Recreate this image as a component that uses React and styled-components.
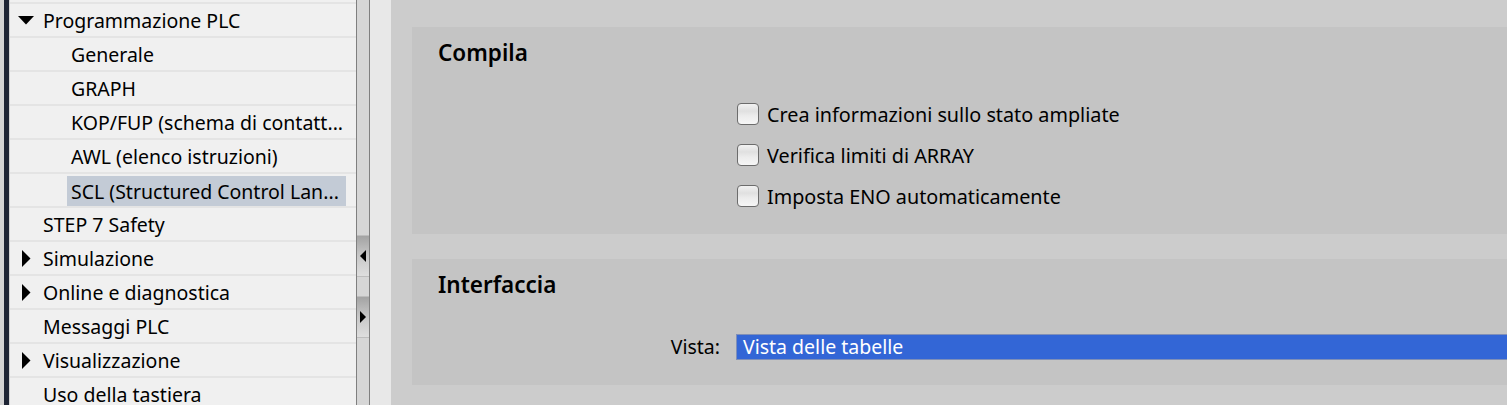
import React from "react";
import styled, { createGlobalStyle } from "styled-components";

const treeItems = [
  { label: "Programmazione PLC", level: 1, arrow: "down" },
  { label: "Generale", level: 2 },
  { label: "GRAPH", level: 2 },
  { label: "KOP/FUP (schema di contatt...", level: 2 },
  { label: "AWL (elenco istruzioni)", level: 2 },
  { label: "SCL (Structured Control Lan...", level: 2, selected: true },
  { label: "STEP 7 Safety", level: 1 },
  { label: "Simulazione", level: 1, arrow: "right" },
  { label: "Online e diagnostica", level: 1, arrow: "right" },
  { label: "Messaggi PLC", level: 1 },
  { label: "Visualizzazione", level: 1, arrow: "right" },
  { label: "Uso della tastiera", level: 1 },
];

const options = [
  "Crea informazioni sullo stato ampliate",
  "Verifica limiti di ARRAY",
  "Imposta ENO automaticamente",
];

function Arrow({ dir }) {
  if (dir === "down") {
    return (
      <ArrowBox>
        <svg width="16" height="9" viewBox="0 0 16 9">
          <polygon points="0,0 16,0 8,8.5" fill="#000" />
        </svg>
      </ArrowBox>
    );
  }
  return (
    <ArrowBox>
      <svg width="9" height="17" viewBox="0 0 9 17">
        <polygon points="0,0 8.5,8.5 0,17" fill="#000" />
      </svg>
    </ArrowBox>
  );
}

function App() {
  return (
    <>
      <GlobalStyle />
      <Window>
        <LeftEdge />
        <DarkBar />
        <Tree>
          {treeItems.map((item) => (
            <Row key={item.label}>
              <RowInner $level={item.level} $selected={item.selected}>
                {item.arrow && <Arrow dir={item.arrow} />}
                <RowLabel>{item.label}</RowLabel>
              </RowInner>
            </Row>
          ))}
        </Tree>
        <Splitter>
          <SplitButton $top={235}>
            <svg width="6" height="12" viewBox="0 0 6 12">
              <polygon points="6,0 0,6 6,12" fill="#000" />
            </svg>
          </SplitButton>
          <SplitButton $top={19}>
            <svg width="6" height="12" viewBox="0 0 6 12">
              <polygon points="0,0 6,6 0,12" fill="#000" />
            </svg>
          </SplitButton>
        </Splitter>
        <Gutter />
        <Content>
          <Panel $height={207}>
            <PanelTitle>Compila</PanelTitle>
            <CheckList>
              {options.map((opt) => (
                <CheckRow key={opt}>
                  <CheckBox />
                  <span>{opt}</span>
                </CheckRow>
              ))}
            </CheckList>
          </Panel>
          <Panel $height={126}>
            <PanelTitle>Interfaccia</PanelTitle>
            <FieldRow>
              <FieldLabel>Vista:</FieldLabel>
              <SelectField>Vista delle tabelle</SelectField>
            </FieldRow>
          </Panel>
        </Content>
      </Window>
    </>
  );
}

const GlobalStyle = createGlobalStyle`
  html, body {
    margin: 0;
    padding: 0;
    overflow: hidden;
    background: #cccccc;
  }
  body {
    font-family: "Noto Sans", "Open Sans", sans-serif;
    color: #000;
  }
`;

const Window = styled.div`
  display: flex;
  height: 405px;
  width: 1507px;
  overflow: hidden;
`;

const LeftEdge = styled.div`
  width: 4px;
  background: #d4d4d4;
`;

const DarkBar = styled.div`
  width: 5px;
  background: #1f2535;
  border-right: 1px solid #d4d4d4;
`;

const Tree = styled.div`
  width: 346px;
  background: #f0f0f0;
  padding-top: 2px;
`;

const Row = styled.div`
  height: 32px;
  border-top: 2px solid #e4e4e4;
  display: flex;
  align-items: stretch;
`;

const RowInner = styled.div`
  display: flex;
  align-items: center;
  position: relative;
  flex: 1;
  margin-right: 10px;
  margin-top: ${(p) => (p.$selected ? "2px" : "0")};
  margin-left: ${(p) => (p.$level === 2 ? "57px" : "0")};
  padding-left: ${(p) => (p.$level === 2 ? "4px" : "33px")};
  background: ${(p) => (p.$selected ? "#c3cbd6" : "transparent")};
`;

const ArrowBox = styled.span`
  position: absolute;
  left: 8px;
  top: 0;
  bottom: 0;
  width: 16px;
  display: flex;
  align-items: center;
  justify-content: center;
`;

const RowLabel = styled.span`
  font-size: 19.5px;
  white-space: nowrap;
  color: #000;
`;

const Splitter = styled.div`
  width: 12px;
  background: #d6d6d6;
  border-left: 1px solid #7f7f7f;
  border-right: 1px solid #7f7f7f;
  display: flex;
  flex-direction: column;
`;

const SplitButton = styled.div`
  margin-top: ${(p) => p.$top}px;
  height: 40px;
  background: linear-gradient(#a3a3a3, #c8c8c8 50%, #dedede);
  border-top: 1px solid #bdbdbd;
  border-bottom: 1px solid #bdbdbd;
  display: flex;
  align-items: center;
  justify-content: center;
`;

const Gutter = styled.div`
  width: 21px;
  background: #e8e8e8;
`;

const Content = styled.div`
  flex: 1;
  background: #cccccc;
  padding: 27px 0 0 21px;
  display: flex;
  flex-direction: column;
  gap: 25px;
`;

const Panel = styled.section`
  height: ${(p) => p.$height}px;
  background: #c4c4c4;
  padding: 10px 0 0 26px;
  box-sizing: border-box;
`;

const PanelTitle = styled.h2`
  margin: 0;
  font-size: 22.5px;
  font-weight: 600;
  line-height: 32px;
`;

const CheckList = styled.div`
  margin-top: 34px;
  margin-left: 299px;
  display: flex;
  flex-direction: column;
  gap: 19px;
`;

const CheckRow = styled.label`
  display: flex;
  align-items: center;
  gap: 8px;
  height: 22px;
  font-size: 19.8px;
`;

const CheckBox = styled.span`
  width: 20px;
  height: 20px;
  border: 1px solid #6c6c6c;
  border-radius: 4px;
  background: linear-gradient(#f2f2f2, #e0e0e0 35%, #ececec 60%, #f6f6f6);
  box-sizing: content-box;
`;

const FieldRow = styled.div`
  margin-top: 32px;
  margin-left: -26px;
  display: grid;
  grid-template-columns: 308px 1fr;
  column-gap: 16px;
  align-items: center;
`;

const FieldLabel = styled.span`
  font-size: 19.5px;
  text-align: right;
`;

const SelectField = styled.div`
  height: 24px;
  line-height: 24px;
  background: #3366d6;
  border-top: 1px solid #7f8fb8;
  border-bottom: 1px solid #7f8fb8;
  border-left: 1px solid #7f8fb8;
  color: #fff;
  font-size: 19.5px;
  padding-left: 6px;
`;

export default App;
